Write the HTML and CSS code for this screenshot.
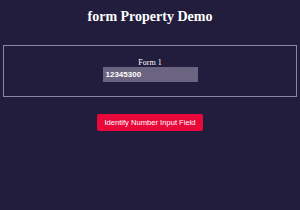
FILE: index.html
```html
<!DOCTYPE html>
<html lang="en">
<head>
    <meta charset="UTF-8">
    <title>form Property Demo</title>
    <link rel="stylesheet" href="styles.css">
</head>
<body>
    <h1>form Property Demo</h1>
    <form id="form1" class="demo-form">
        <label for="num">Form 1</label>
        <input type="number" id="num" value="12345300">
    </form>
    <div class="actions">
        <button type="button" class="identify-btn">Identify Number Input Field</button>
    </div>
</body>
</html>
```

FILE: styles.css
```css
body {
    margin: 0;
    padding: 0 3px;
    background-color: #231d3d;
    color: #fff;
    font-family: 'Liberation Serif', serif;
}

h1 {
    font-size: 14px;
    text-align: center;
    margin: 8px 0 19px;
    line-height: 18px;
}

.demo-form {
    border: 1px solid #8d87a6;
    padding: 12px 0 14px;
    display: flex;
    flex-direction: column;
    align-items: center;
}

.demo-form label {
    display: block;
    font-size: 8px;
    line-height: 9px;
}

.demo-form input {
    width: 95px;
    height: 15px;
    box-sizing: border-box;
    border: none;
    padding: 0 3px;
    background-color: #6a6480;
    color: #fff;
    font-family: 'Liberation Sans', sans-serif;
    font-weight: bold;
    font-size: 8px;
    -moz-appearance: textfield;
}

.demo-form input::-webkit-outer-spin-button,
.demo-form input::-webkit-inner-spin-button {
    -webkit-appearance: none;
    margin: 0;
}

.actions {
    display: flex;
    justify-content: center;
    margin-top: 17px;
}

.identify-btn {
    background-color: #e8083a;
    color: #fff;
    border: none;
    border-radius: 2px;
    padding: 0 7px;
    height: 17px;
    font-family: 'Liberation Sans', sans-serif;
    font-size: 7.6px;
}
```
